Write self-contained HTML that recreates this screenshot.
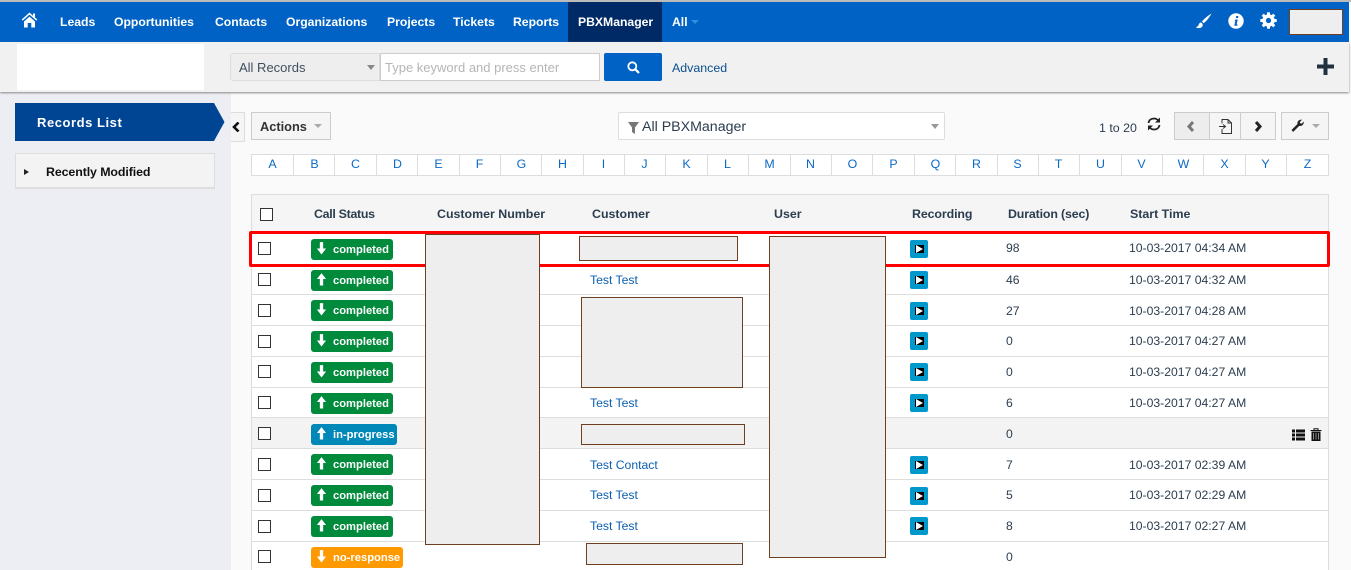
<!DOCTYPE html>
<html><head><meta charset="utf-8"><title>PBXManager</title>
<style>
html,body{margin:0;padding:0}
body{width:1351px;height:570px;overflow:hidden;position:relative;background:#fafafa;font-family:"Liberation Sans",sans-serif;font-size:12.2px;color:#2b3d4f}
div,span,svg{position:absolute;display:block;box-sizing:border-box}
.t{white-space:nowrap;line-height:16px;height:16px}
.n{color:#fff;font-weight:bold;font-size:12.2px;top:14px}
.h{font-weight:bold;font-size:12.4px;top:206px;color:#2b3d4f}
.l{color:#0b5fb0}
.r{background:#eee;border:1px solid #6f3f22}
.a{top:156px;width:41px;text-align:center;color:#0b6ac4;line-height:16px;font-size:12.4px}
.s{top:154px;width:1px;height:22px;background:#ddd}
.ln{left:252px;width:1077px;height:1px;background:#ddd}
.c{left:258px;width:13px;height:13px;border:1px solid #333;background:#fff}
.b{left:311px;width:82px;height:21px;border-radius:3px;background:#008a3b;color:#fff;font-weight:bold;font-size:11.2px;line-height:22px;padding-left:22px;white-space:nowrap}
.b svg{left:5px;top:3px;width:11px;height:13px}
.p{left:910px;width:18px;height:18px;background:#0099cc;border-radius:2px}
.p i{position:absolute;display:block;left:5px;top:5px;width:9px;height:8px;background:#000}
.p b{position:absolute;display:block;left:6px;top:5px;width:0;height:0;border-left:7px solid #fff;border-top:4px solid transparent;border-bottom:4px solid transparent}
.btn{background:#f5f5f5;border:1px solid #ccc}
</style></head><body>
<svg width="0" height="0" style="left:0;top:0"><defs>
<symbol id="dn" viewBox="0 0 12 14"><path d="M4.2 0h3.6v7H11L6 13.500 1 7h3.200z" fill="#fff"/></symbol>
<symbol id="up" viewBox="0 0 12 14"><path d="M4.2 13.500h3.600v-7H11L6 0 1 6.500h3.200z" fill="#fff"/></symbol>
</defs></svg>

<!-- top bar -->
<div style="left:0;top:0;width:1351px;height:2px;background:#bbb"></div>
<div style="left:0;top:2px;width:1349px;height:40px;background:#0062c4"></div>
<svg style="left:21px;top:12px" width="17" height="16" viewBox="0 0 17 16"><path d="M8.500 0.500 0.700 7.500l1 1.100L8.500 2.600l6.800 6 1-1.100-2.300-2V1.500h-2v2.200zM3 9.500 8.500 4.600 14 9.500V15.500H10.300V11H6.700V15.500H3z" fill="#fff"/></svg>
<span class="t n" style="left:60px">Leads</span>
<span class="t n" style="left:114px">Opportunities</span>
<span class="t n" style="left:215px">Contacts</span>
<span class="t n" style="left:286px">Organizations</span>
<span class="t n" style="left:387px">Projects</span>
<span class="t n" style="left:453px">Tickets</span>
<span class="t n" style="left:513px">Reports</span>
<div style="left:568px;top:2px;width:94px;height:40px;background:#002a66"></div>
<span class="t n" style="left:578px">PBXManager</span>
<span class="t n" style="left:672px">All</span>
<div style="left:691px;top:20px;width:0;height:0;border-left:4px solid transparent;border-right:4px solid transparent;border-top:4px solid #2b8fdf"></div>
<svg style="left:1195px;top:13px" width="17" height="16" viewBox="0 0 17 16"><path d="M16.500 0.500C13 2.500 9 6 7 8.500l1.800 1.700C11.500 8 14.800 4 16.500 0.500zM6 9.500C4 9.500 4 11.500 3.200 12.800 2.700 13.600 1.500 14 0.800 14.200 2.500 15.500 6 15.500 7.300 13.500 8.200 12 7.800 10.500 6 9.500z" fill="#fff"/></svg>
<svg style="left:1228px;top:13px" width="16" height="16" viewBox="0 0 16 16"><circle cx="8" cy="8" r="7.700" fill="#fff"/><path d="M8.300 3h2.100l-.4 2H7.900zM7.500 6.500h2.200L8.600 11.500h1l-.3 1.200H6.300l1-5H6.500z" fill="#0062c4"/></svg>
<svg style="left:1260px;top:12px" width="17" height="17" viewBox="0 0 17 17"><g fill="#fff"><circle cx="8.500" cy="8.500" r="6.200"/><rect x="7" y="0.300" width="3" height="16.400"/><rect x="0.300" y="7" width="16.400" height="3"/><rect x="7" y="0.300" width="3" height="16.400" transform="rotate(45 8.500 8.500)"/><rect x="7" y="0.300" width="3" height="16.400" transform="rotate(-45 8.500 8.500)"/></g><circle cx="8.500" cy="8.500" r="2.600" fill="#0062c4"/></svg>
<div class="r" style="left:1289px;top:9px;width:54px;height:26px"></div>

<!-- sub header -->
<div style="left:0;top:42px;width:1349px;height:50px;background:#f1f1f1;box-shadow:0 1px 2px #888;z-index:3"></div>
<div style="z-index:4;left:0;top:0;width:0;height:0">
<div style="left:17px;top:44px;width:187px;height:46px;background:#fff"></div>
<div style="left:230px;top:53px;width:150px;height:28px;background:#eee;border:1px solid #ddd;border-radius:3px 0 0 3px"></div>
<span class="t" style="left:239px;top:60px;font-size:13px;color:#3f4f5f">All Records</span>
<div style="left:367px;top:65px;width:0;height:0;border-left:4px solid transparent;border-right:4px solid transparent;border-top:5px solid #888"></div>
<div style="left:380px;top:53px;width:220px;height:28px;background:#fff;border:1px solid #ccc"></div>
<span class="t" style="left:385px;top:60px;font-size:13px;color:#b5b5b5">Type keyword and press enter</span>
<div style="left:604px;top:53px;width:58px;height:28px;background:#0062c4;border-radius:2px"></div>
<svg style="left:627px;top:61px" width="13" height="13" viewBox="0 0 13 13"><circle cx="5.300" cy="5.300" r="4" fill="none" stroke="#fff" stroke-width="1.800"/><path d="M8.300 8.300 12 12" stroke="#fff" stroke-width="2.200"/></svg>
<span class="t" style="left:672px;top:60px;font-size:12.4px;color:#0b4f8f">Advanced</span>
<svg style="left:1317px;top:58px" width="17" height="17" viewBox="0 0 17 17"><path d="M6.500 0h4v6.500H17v4h-6.500V17h-4v-6.500H0v-4h6.500z" fill="#22313f"/></svg>
</div>

<!-- sidebar -->
<div style="left:0;top:92px;width:231px;height:478px;background:#eceef3"></div>
<svg style="left:15px;top:103px" width="210" height="38" viewBox="0 0 210 38"><path d="M0 0H199L209.500 19 199 38H0z" fill="#004494"/></svg>
<span class="t" style="left:37px;top:115px;color:#fff;font-weight:bold;font-size:13px;letter-spacing:.55px">Records List</span>
<div style="left:15px;top:153px;width:200px;height:36px;background:#f3f3f3;border:1px solid #ddd;border-bottom:2px solid #ddd"></div>
<div style="left:24px;top:169px;width:0;height:0;border-left:5px solid #222;border-top:3px solid transparent;border-bottom:3px solid transparent"></div>
<span class="t" style="left:46px;top:164px;color:#111;font-weight:bold;font-size:12.4px;letter-spacing:-.1px">Recently Modified</span>

<!-- toolbar -->
<div style="left:231px;top:112px;width:14px;height:30px;background:#f5f5f5;border:1px solid #ddd;border-left:0"></div>
<svg style="left:232px;top:122px" width="10" height="10" viewBox="0 0 10 10"><path d="M6.500.5 2 5l4.500 4.500" fill="none" stroke="#111" stroke-width="2.600"/></svg>
<div class="btn" style="left:251px;top:112px;width:80px;height:28px"></div>
<span class="t" style="left:260px;top:119px;font-weight:bold;font-size:12.8px;color:#333">Actions</span>
<div style="left:314px;top:124px;width:0;height:0;border-left:4px solid transparent;border-right:4px solid transparent;border-top:4px solid #aaa"></div>
<div style="left:618px;top:112px;width:327px;height:28px;background:#fff;border:1px solid #ddd;border-radius:2px"></div>
<svg style="left:628px;top:122px" width="11" height="12" viewBox="0 0 11 12"><path d="M0 0h11L7 5.500V12L4 10V5.500z" fill="#777"/></svg>
<span class="t" style="left:642px;top:119px;font-size:14.200px;color:#2b3d4f">All PBXManager</span>
<div style="left:931px;top:124px;width:0;height:0;border-left:4px solid transparent;border-right:4px solid transparent;border-top:5px solid #999"></div>
<span class="t" style="left:1099px;top:120px;font-size:12.400px;color:#2b3d4f">1 to 20</span>
<svg style="left:1147px;top:117px" width="14" height="14" viewBox="0 0 14 14"><path d="M1.500 6C2 3 4.300 1.500 7 1.500c2 0 3.500 1 4.300 2M12.500 8C12 11 9.700 12.500 7 12.500c-2 0-3.500-1-4.300-2" fill="none" stroke="#222" stroke-width="1.800"/><path d="M13 .5V5.500H8zM1 13.500V8.500H6z" fill="#222"/></svg>
<div class="btn" style="left:1174px;top:112px;width:36px;height:28px;background:#ededed"></div>
<div class="btn" style="left:1209px;top:112px;width:32px;height:28px"></div>
<div class="btn" style="left:1240px;top:112px;width:36px;height:28px"></div>
<svg style="left:1186px;top:121px" width="10" height="11" viewBox="0 0 10 11"><path d="M7 1 3 5.500 7 10" fill="none" stroke="#777" stroke-width="3"/></svg>
<svg style="left:1219px;top:119px" width="13" height="15" viewBox="0 0 13 15"><path d="M3 4.500V.5h6l3.500 3.500v10.500H3V10M9 .5V4h3.500M0 7.500h6M4 5.500 6.500 7.500 4 9.500" fill="none" stroke="#333" stroke-width="1"/></svg>
<svg style="left:1253px;top:121px" width="10" height="11" viewBox="0 0 10 11"><path d="M3 1 7 5.500 3 10" fill="none" stroke="#222" stroke-width="3"/></svg>
<div class="btn" style="left:1281px;top:112px;width:48px;height:28px"></div>
<svg style="left:1291px;top:119px" width="13" height="13" viewBox="0 0 13 13"><path d="M.5 11 6.500 5C6 2.500 8 .5 11 .7L8.800 3l.4 1.300 1.300.4L12.800 2.500c.2 3-2 5-4.600 4.400L2.200 12.900z" fill="#222"/></svg>
<div style="left:1312px;top:124px;width:0;height:0;border-left:4px solid transparent;border-right:4px solid transparent;border-top:4px solid #aaa"></div>

<!-- alphabet -->
<div style="left:251px;top:154px;width:1078px;height:22px;background:#fff;border:1px solid #ddd"></div>
<span class="a" style="left:252px">A</span><span class="a" style="left:294px">B</span><span class="a" style="left:335px">C</span><span class="a" style="left:377px">D</span><span class="a" style="left:418px">E</span><span class="a" style="left:459px">F</span><span class="a" style="left:501px">G</span><span class="a" style="left:542px">H</span><span class="a" style="left:583px">I</span><span class="a" style="left:624px">J</span><span class="a" style="left:666px">K</span><span class="a" style="left:707px">L</span><span class="a" style="left:749px">M</span><span class="a" style="left:790px">N</span><span class="a" style="left:832px">O</span><span class="a" style="left:873px">P</span><span class="a" style="left:915px">Q</span><span class="a" style="left:956px">R</span><span class="a" style="left:997px">S</span><span class="a" style="left:1038px">T</span><span class="a" style="left:1080px">U</span><span class="a" style="left:1121px">V</span><span class="a" style="left:1163px">W</span><span class="a" style="left:1204px">X</span><span class="a" style="left:1245px">Y</span><span class="a" style="left:1287px">Z</span>
<i class="s" style="position:absolute;display:block;left:293px"></i><i class="s" style="position:absolute;display:block;left:334px"></i><i class="s" style="position:absolute;display:block;left:376px"></i><i class="s" style="position:absolute;display:block;left:417px"></i><i class="s" style="position:absolute;display:block;left:459px"></i><i class="s" style="position:absolute;display:block;left:500px"></i><i class="s" style="position:absolute;display:block;left:541px"></i><i class="s" style="position:absolute;display:block;left:583px"></i><i class="s" style="position:absolute;display:block;left:624px"></i><i class="s" style="position:absolute;display:block;left:665px"></i><i class="s" style="position:absolute;display:block;left:707px"></i><i class="s" style="position:absolute;display:block;left:748px"></i><i class="s" style="position:absolute;display:block;left:790px"></i><i class="s" style="position:absolute;display:block;left:831px"></i><i class="s" style="position:absolute;display:block;left:872px"></i><i class="s" style="position:absolute;display:block;left:914px"></i><i class="s" style="position:absolute;display:block;left:955px"></i><i class="s" style="position:absolute;display:block;left:997px"></i><i class="s" style="position:absolute;display:block;left:1038px"></i><i class="s" style="position:absolute;display:block;left:1079px"></i><i class="s" style="position:absolute;display:block;left:1121px"></i><i class="s" style="position:absolute;display:block;left:1162px"></i><i class="s" style="position:absolute;display:block;left:1203px"></i><i class="s" style="position:absolute;display:block;left:1245px"></i><i class="s" style="position:absolute;display:block;left:1286px"></i>

<!-- table -->
<div style="left:251px;top:194px;width:1078px;height:376px;background:#fff;border:1px solid #ddd;border-bottom:0"></div>
<div style="left:252px;top:195px;width:1076px;height:38px;background:#f5f5f5"></div>
<div style="left:252px;top:418px;width:1076px;height:30px;background:#f3f3f3"></div>
<div class="ln" style="top:294px"></div><div class="ln" style="top:325px"></div><div class="ln" style="top:356px"></div><div class="ln" style="top:387px"></div><div class="ln" style="top:417px"></div><div class="ln" style="top:448px"></div><div class="ln" style="top:479px"></div><div class="ln" style="top:510px"></div><div class="ln" style="top:541px"></div>

<div class="c" style="left:260px;top:208px"></div>
<span class="t h" style="left:314px;letter-spacing:-.3px">Call Status</span>
<span class="t h" style="left:437px">Customer Number</span>
<span class="t h" style="left:592px">Customer</span>
<span class="t h" style="left:774px">User</span>
<span class="t h" style="left:912px;letter-spacing:-.1px">Recording</span>
<span class="t h" style="left:1008px;letter-spacing:-.15px">Duration (sec)</span>
<span class="t h" style="left:1130px">Start Time</span>

<div class="c" style="top:242px"></div><div class="c" style="top:273px"></div><div class="c" style="top:304px"></div><div class="c" style="top:335px"></div><div class="c" style="top:365px"></div><div class="c" style="top:396px"></div><div class="c" style="top:427px"></div><div class="c" style="top:458px"></div><div class="c" style="top:489px"></div><div class="c" style="top:520px"></div><div class="c" style="top:550px"></div>

<div class="b" style="top:239px"><svg width="11" height="13"><use href="#dn"/></svg>completed</div>
<div class="b" style="top:270px"><svg width="11" height="13"><use href="#up"/></svg>completed</div>
<div class="b" style="top:300px"><svg width="11" height="13"><use href="#dn"/></svg>completed</div>
<div class="b" style="top:331px"><svg width="11" height="13"><use href="#dn"/></svg>completed</div>
<div class="b" style="top:362px"><svg width="11" height="13"><use href="#dn"/></svg>completed</div>
<div class="b" style="top:393px"><svg width="11" height="13"><use href="#up"/></svg>completed</div>
<div class="b" style="top:424px;width:86px;background:#0088b8"><svg width="11" height="13"><use href="#up"/></svg>in-progress</div>
<div class="b" style="top:454px"><svg width="11" height="13"><use href="#up"/></svg>completed</div>
<div class="b" style="top:485px"><svg width="11" height="13"><use href="#up"/></svg>completed</div>
<div class="b" style="top:516px"><svg width="11" height="13"><use href="#up"/></svg>completed</div>
<div class="b" style="top:547px;width:92px;background:#ff9900"><svg width="11" height="13"><use href="#dn"/></svg>no-response</div>

<span class="t l" style="left:590px;top:272px">Test Test</span>
<span class="t l" style="left:590px;top:395px">Test Test</span>
<span class="t l" style="left:590px;top:457px">Test Contact</span>
<span class="t l" style="left:590px;top:487px">Test Test</span>
<span class="t l" style="left:590px;top:518px">Test Test</span>

<div class="p" style="top:240px"><i></i><b></b></div><div class="p" style="top:271px"><i></i><b></b></div><div class="p" style="top:302px"><i></i><b></b></div><div class="p" style="top:332px"><i></i><b></b></div><div class="p" style="top:363px"><i></i><b></b></div><div class="p" style="top:394px"><i></i><b></b></div><div class="p" style="top:456px"><i></i><b></b></div><div class="p" style="top:487px"><i></i><b></b></div><div class="p" style="top:517px"><i></i><b></b></div>

<span class="t" style="left:1006px;top:240px">98</span><span class="t" style="left:1006px;top:272px">46</span><span class="t" style="left:1006px;top:303px">27</span><span class="t" style="left:1006px;top:333px">0</span><span class="t" style="left:1006px;top:364px">0</span><span class="t" style="left:1006px;top:395px">6</span><span class="t" style="left:1006px;top:426px">0</span><span class="t" style="left:1006px;top:457px">7</span><span class="t" style="left:1006px;top:487px">5</span><span class="t" style="left:1006px;top:518px">8</span><span class="t" style="left:1006px;top:549px">0</span>

<span class="t" style="left:1129px;top:240px">10-03-2017 04:34 AM</span>
<span class="t" style="left:1129px;top:272px">10-03-2017 04:32 AM</span>
<span class="t" style="left:1129px;top:303px">10-03-2017 04:28 AM</span>
<span class="t" style="left:1129px;top:333px">10-03-2017 04:27 AM</span>
<span class="t" style="left:1129px;top:364px">10-03-2017 04:27 AM</span>
<span class="t" style="left:1129px;top:395px">10-03-2017 04:27 AM</span>
<span class="t" style="left:1129px;top:457px">10-03-2017 02:39 AM</span>
<span class="t" style="left:1129px;top:487px">10-03-2017 02:29 AM</span>
<span class="t" style="left:1129px;top:518px">10-03-2017 02:27 AM</span>

<svg style="left:1292px;top:429px" width="13" height="12" viewBox="0 0 13 12"><path d="M0 .5h3v3H0zM4 .5h9v3H4zM0 4.500h3v3H0zM4 4.500h9v3H4zM0 8.500h3v3H0zM4 8.500h9v3H4z" fill="#111"/></svg>
<svg style="left:1310px;top:428px" width="12" height="13" viewBox="0 0 12 13"><path d="M.5 2.500h11M4 2.500V.7h4v1.800" fill="none" stroke="#111"/><path d="M1.500 3.500h9V13h-9z" fill="#111"/><path d="M3.500 5v6.500M6 5v6.500M8.500 5v6.500" stroke="#888"/></svg>

<!-- highlight and redactions -->
<div style="left:249px;top:231px;width:1081px;height:36px;border:3px solid #f00;border-radius:2px"></div>
<div class="r" style="left:425px;top:234px;width:115px;height:311px"></div>
<div class="r" style="left:579px;top:236px;width:159px;height:25px"></div>
<div class="r" style="left:581px;top:297px;width:162px;height:91px"></div>
<div class="r" style="left:581px;top:424px;width:164px;height:21px"></div>
<div class="r" style="left:586px;top:543px;width:157px;height:22px"></div>
<div class="r" style="left:769px;top:236px;width:117px;height:322px"></div>
</body></html>
